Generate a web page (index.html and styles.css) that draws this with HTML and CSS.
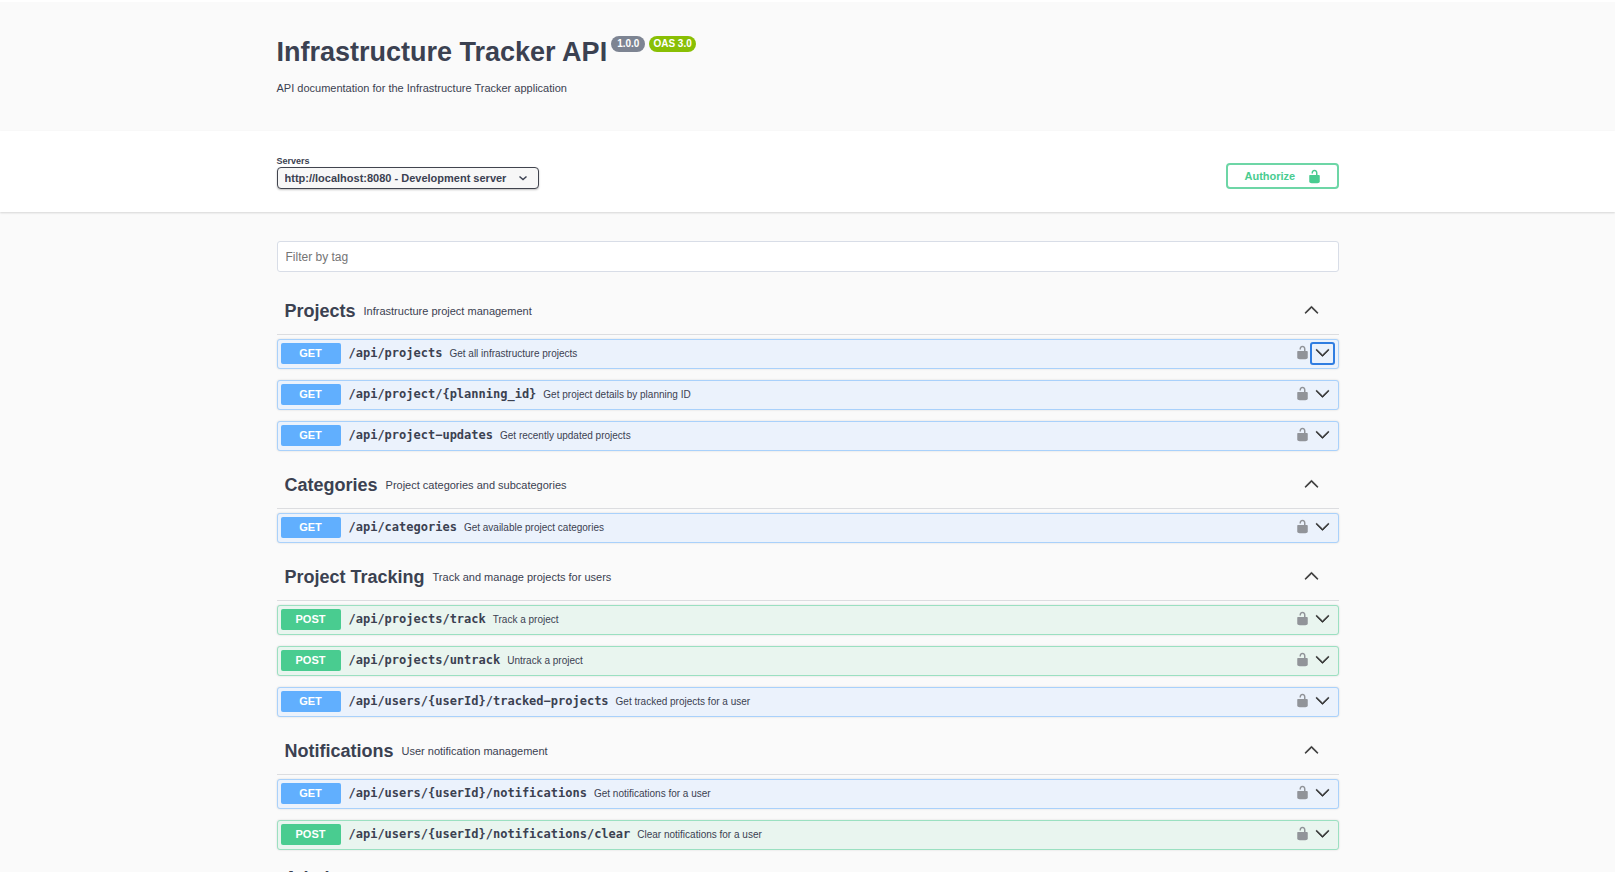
FILE: index.html
```html
<!DOCTYPE html>
<html lang="en">
<head>
<meta charset="utf-8">
<title>Infrastructure Tracker API</title>
<link rel="stylesheet" href="styles.css">
</head>
<body>
<svg class="sprite" aria-hidden="true">
  <symbol id="unlocked" viewBox="0 0 20 20"><path d="M15.8 8H14V5.6C14 2.703 12.665 1 10 1 7.334 1 6 2.703 6 5.6V6h2v-.801C8 3.754 8.797 3 10 3c1.203 0 2 .754 2 2.199V8H4c-.553 0-1 .646-1 1.199V17c0 .549.428 1.139.951 1.307l1.197.387C5.672 18.861 6.55 19 7.1 19h5.8c.549 0 1.428-.139 1.951-.307l1.196-.387c.524-.167.953-.757.953-1.306V9.199C17 8.646 16.352 8 15.8 8z"/></symbol>
  <symbol id="down" viewBox="0 0 20 20"><path d="M17.418 6.109c.272-.268.709-.268.979 0s.271.701 0 .969l-7.908 7.83c-.27.268-.707.268-.979 0l-7.908-7.83c-.27-.268-.27-.701 0-.969.271-.268.709-.268.979 0L10 13.25l7.418-7.141z"/></symbol>
  <symbol id="up" viewBox="0 0 20 20"><path d="M17.418 14.908c.272.27.709.27.979 0s.271-.701 0-.969l-7.908-7.83c-.27-.268-.707-.268-.979 0l-7.908 7.83c-.27.268-.27.701 0 .969.271.27.709.27.979 0L10 7.767l7.418 7.141z"/></symbol>
</svg>
<div class="page">
  <header class="info">
    <div class="wrapper">
      <div class="title-row">
        <h1 class="title">Infrastructure Tracker API</h1>
        <span class="version">1.0.0</span>
        <span class="version oas">OAS 3.0</span>
      </div>
      <p class="description">API documentation for the Infrastructure Tracker application</p>
    </div>
  </header>
  <section class="schemes">
    <div class="wrapper schemes-row">
      <div class="servers">
        <label class="servers-label" for="servers">Servers</label>
        <div class="select-wrap">
          <select class="select" id="servers"><option>http://localhost:8080 - Development server</option></select>
          <svg class="select-arrow" viewBox="0 0 20 20" aria-hidden="true"><path d="M3 7l7 6 7-6" fill="none" stroke="currentColor" stroke-width="3"/></svg>
        </div>
      </div>
      <button class="authorize" type="button">Authorize <svg class="icon-lock" aria-hidden="true"><use href="#unlocked"/></svg></button>
    </div>
  </section>
  <main class="wrapper">
    <input class="filter" type="text" placeholder="Filter by tag" aria-label="Filter by tag">
    <div id="tags"></div>
  </main>
</div>
<script src="app.js"></script>
</body>
</html>
```
FILE: styles.css
```css
* { box-sizing: border-box; }
html { background: #fff; }
body {
  margin: 0;
  height: 100vh;
  padding: 2px 4px 4px 0;
  overflow: hidden;
  color: #3b4151;
  font-family: "Liberation Sans", Arial, sans-serif;
}
button, select, input { font-family: inherit; color: inherit; }
.sprite { display: none; }
.page { height: 100%; overflow: hidden; background: #fafafa; }
.wrapper { max-width: 1092px; margin: 0 auto; padding: 0 15px; }

.info { padding: 34px 0 36px; }
.title-row { display: flex; align-items: flex-start; gap: 4px; }
.title { margin: 0; font-size: 27px; line-height: 32px; }
.version {
  height: 16px;
  padding: 0 6px;
  border-radius: 8px;
  background: #7d8492;
  color: #fff;
  font-size: 10px;
  font-weight: 700;
  line-height: 16px;
}
.oas { padding: 0 4px; background: #89bf04; }
.description { margin: 13px 0 0; font-size: 11px; line-height: 14px; }

.schemes { padding: 24px 0 23px; background: #fff; box-shadow: 0 1px 2px rgba(0, 0, 0, .15); }
.schemes-row { display: flex; align-items: flex-end; justify-content: space-between; }
.servers-label { display: block; font-size: 9px; font-weight: 700; line-height: 12px; }
.select-wrap { position: relative; width: 262px; }
.select {
  display: block;
  width: 100%;
  height: 22px;
  padding: 0 7px;
  border: 1px solid #41444e;
  border-radius: 4px;
  background: #f7f7f7;
  box-shadow: 0 1px 2px rgba(0, 0, 0, .25);
  appearance: none;
  font-size: 11px;
  font-weight: 700;
}
.select-arrow { position: absolute; top: 6px; right: 11px; width: 10px; height: 10px; pointer-events: none; }
.authorize {
  display: flex;
  align-items: center;
  justify-content: space-between;
  width: 113px;
  height: 26px;
  padding: 0 15px 0 17px;
  border: 2px solid #6dd6a6;
  border-radius: 4px;
  background: transparent;
  color: #49cc90;
  font-size: 11px;
  font-weight: 700;
}
.icon-lock { width: 15px; height: 15px; fill: currentColor; }

.filter {
  display: block;
  width: 100%;
  height: 31px;
  margin: 29px 0 16px;
  padding: 0 8px;
  border: 1px solid #d8dde7;
  border-radius: 3px;
  background: #fff;
  font-size: 12px;
}
.filter::placeholder { color: #757575; }

.tag { padding-bottom: 11px; }
.tag-head {
  display: flex;
  align-items: center;
  gap: 8px;
  height: 47px;
  margin-bottom: 4px;
  padding: 0 20px 1px 8px;
  border-bottom: 1px solid #dcdde0;
}
.tag:last-child .tag-head { height: 36px; }
.tag-name { margin: 0; font-size: 18px; line-height: 24px; }
.tag-text { flex: 1; font-size: 11px; }
.toggle { display: flex; padding: 3px 5px 4px; border: 0; border-radius: 3px; background: transparent; }
.tag-head .toggle { padding: 0 0 2px; }
.chevron { width: 15px; height: 15px; margin-bottom: 1px; fill: #333; stroke: #333; stroke-width: 1px; }
.ops { display: flex; flex-direction: column; gap: 11px; }
.op {
  display: flex;
  align-items: center;
  height: 30px;
  padding: 0 3px 2px;
  border: 1px solid #a9d1fb;
  border-radius: 3px;
  background: #ebf2fc;
  box-shadow: 0 0 2px rgba(0, 0, 0, .15);
}
.op.post { border-color: #9be0c1; background: #e9f5ef; }
.method {
  width: 60px;
  border-radius: 2px;
  background: #61affe;
  color: #fff;
  font-size: 11px;
  font-weight: 700;
  line-height: 21px;
  text-align: center;
}
.post .method { background: #49cc90; }
.path { margin: 0 7px 0 8px; font: 700 12px "DejaVu Sans Mono", monospace; }
.summary { flex: 1; font-size: 10px; }
.lock { display: flex; padding: 0 0 2px; border: 0; background: transparent; color: #919499; }
.toggle.focused { box-shadow: inset 0 0 0 2px #2f7de1; }
```
FILE: app.js
```js
const tags = [
  ["Projects", "Infrastructure project management", [
    ["GET", "/api/projects", "Get all infrastructure projects", true],
    ["GET", "/api/project/{planning_id}", "Get project details by planning ID"],
    ["GET", "/api/project-updates", "Get recently updated projects"]]],
  ["Categories", "Project categories and subcategories", [
    ["GET", "/api/categories", "Get available project categories"]]],
  ["Project Tracking", "Track and manage projects for users", [
    ["POST", "/api/projects/track", "Track a project"],
    ["POST", "/api/projects/untrack", "Untrack a project"],
    ["GET", "/api/users/{userId}/tracked-projects", "Get tracked projects for a user"]]],
  ["Notifications", "User notification management", [
    ["GET", "/api/users/{userId}/notifications", "Get notifications for a user"],
    ["POST", "/api/users/{userId}/notifications/clear", "Clear notifications for a user"]]],
  ["Admin", "", []]
];

const operation = ([method, path, summary, focused]) => `
  <div class="op ${method.toLowerCase()}">
    <span class="method">${method}</span>
    <span class="path">${path.replace("-", "\u2212")}</span>
    <span class="summary">${summary}</span>
    <button class="lock" type="button" aria-label="Authorization"><svg class="icon-lock"><use href="#unlocked"/></svg></button>
    <button class="toggle${focused ? " focused" : ""}" type="button" aria-label="Expand ${path}"><svg class="chevron"><use href="#down"/></svg></button>
  </div>`;

document.getElementById("tags").innerHTML = tags.map(([name, text, ops]) => `
  <section class="tag">
    <div class="tag-head">
      <h2 class="tag-name">${name}</h2>
      <span class="tag-text">${text}</span>
      <button class="toggle" type="button" aria-label="Collapse ${name}"><svg class="chevron"><use href="#up"/></svg></button>
    </div>
    <div class="ops">${ops.map(operation).join("")}</div>
  </section>`).join("");
```
